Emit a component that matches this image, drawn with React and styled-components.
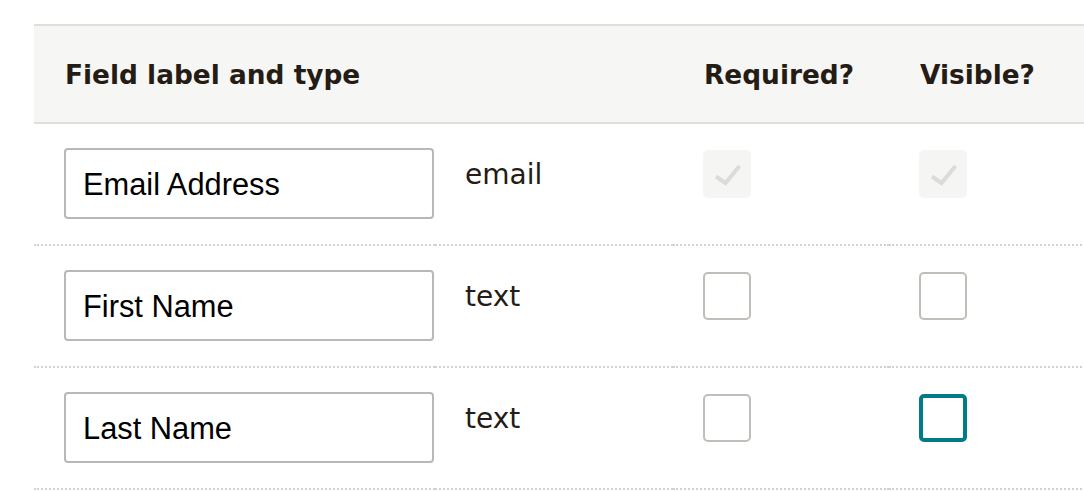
import React from "react";
import styled, { createGlobalStyle } from "styled-components";

const Global = createGlobalStyle`
  html, body { margin: 0; padding: 0; background: #ffffff; overflow: hidden; }
  body { font-family: "DejaVu Sans", "Open Sans", sans-serif; color: #241c15; }
`;

const Page = styled.div`
  padding: 24px 0 0 34px;
`;

const Table = styled.div`
  width: 1120px;
  display: grid;
  grid-template-columns: 401px 238px 216px 1fr;
`;

const HeadCell = styled.div`
  background: #f6f6f4;
  border-top: 2px solid #e0dfdc;
  border-bottom: 2px solid #e0dfdc;
  padding: 29px 30px 27px 31px;
  font-family: "DejaVu Sans", sans-serif;
  font-size: 26.4px;
  line-height: 40px;
  font-weight: 700;
  color: #241c15;
  white-space: nowrap;
`;

const Cell = styled.div`
  border-bottom: 2px dotted #d3d1ce;
  padding: ${(p) => p.$pt || 24}px 30px 0 30px;
  box-sizing: border-box;
  height: 122px;
  font-family: "DejaVu Sans", sans-serif;
  font-size: 28px;
  line-height: 40px;
  color: #241c15;
`;

const LabelInput = styled.input`
  box-sizing: border-box;
  width: 370px;
  height: 71px;
  border: 2px solid #b8b8b8;
  border-radius: 4px;
  padding: 2px 17px 0 17px;
  font-family: "Liberation Sans", Arial, sans-serif;
  font-size: 30.8px;
  color: #000000;
  background: #ffffff;
  outline: none;
  margin: 0;
`;

const Box = styled.span`
  display: block;
  box-sizing: border-box;
  width: 48px;
  height: 48px;
  border-radius: 5px;
  background: ${(p) => (p.$disabled ? "#f5f5f3" : "#ffffff")};
  border: ${(p) =>
    p.$disabled ? "none" : p.$focus ? "4px solid #007c89" : "2px solid #c1bdb8"};
  position: relative;
`;

const CheckSvg = styled.svg`
  position: absolute;
  left: 0;
  top: 0;
`;

function Checkbox({ disabled, checked, focus }) {
  return (
    <Box $disabled={disabled} $focus={focus}>
      {checked && (
        <CheckSvg width="48" height="48" viewBox="0 0 48 48">
          <path
            d="M13 26.5 L22.5 33 L36.5 16"
            fill="none"
            stroke="#dcdbd8"
            strokeWidth="4"
            strokeLinecap="butt"
            strokeLinejoin="miter"
          />
        </CheckSvg>
      )}
    </Box>
  );
}

const rows = [
  { label: "Email Address", type: "email", locked: true },
  { label: "First Name", type: "text" },
  { label: "Last Name", type: "text", focus: true },
];

export default function App() {
  return (
    <>
      <Global />
      <Page>
        <Table>
          <HeadCell>Field label and type</HeadCell>
          <HeadCell />
          <HeadCell>Required?</HeadCell>
          <HeadCell>Visible?</HeadCell>
          {rows.map((r) => (
            <React.Fragment key={r.label}>
              <Cell>
                <LabelInput defaultValue={r.label} readOnly />
              </Cell>
              <Cell $pt={31}>{r.type}</Cell>
              <Cell $pt={26}>
                <Checkbox disabled={r.locked} checked={r.locked} />
              </Cell>
              <Cell $pt={26}>
                <Checkbox disabled={r.locked} checked={r.locked} focus={r.focus} />
              </Cell>
            </React.Fragment>
          ))}
        </Table>
      </Page>
    </>
  );
}
